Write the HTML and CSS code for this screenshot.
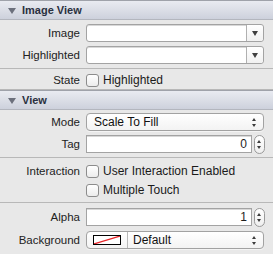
FILE: index.html
```html
<!DOCTYPE html>
<html lang="en">
<head>
    <meta charset="UTF-8">
    <title>Attributes Inspector</title>
    <link rel="stylesheet" href="styles.css">
</head>
<body>
    <div class="inspector">
        <div class="section-header"><span class="disclosure"></span>Image View</div>
        <div class="group">
            <div class="row">
                <label class="label">Image</label>
                <div class="combo"><span class="combo-text"></span><span class="combo-btn"><span class="arrow-down"></span></span></div>
            </div>
            <div class="row">
                <label class="label">Highlighted</label>
                <div class="combo"><span class="combo-text"></span><span class="combo-btn"><span class="arrow-down"></span></span></div>
            </div>
        </div>
        <div class="group single">
            <div class="row">
                <label class="label">State</label>
                <span class="check"></span><span class="check-label">Highlighted</span>
            </div>
        </div>

        <div class="section-header"><span class="disclosure"></span>View</div>
        <div class="group tight">
            <div class="row">
                <label class="label">Mode</label>
                <div class="popup"><span class="popup-text">Scale To Fill</span><span class="updown"></span></div>
            </div>
            <div class="row">
                <label class="label">Tag</label>
                <div class="number"><span class="number-field">0</span><span class="stepper"><span class="updown"></span></span></div>
            </div>
        </div>
        <div class="group checks">
            <div class="row">
                <label class="label">Interaction</label>
                <span class="check"></span><span class="check-label">User Interaction Enabled</span>
            </div>
            <div class="row">
                <label class="label"></label>
                <span class="check"></span><span class="check-label">Multiple Touch</span>
            </div>
        </div>
        <div class="group last">
            <div class="row">
                <label class="label">Alpha</label>
                <div class="number"><span class="number-field">1</span><span class="stepper"><span class="updown"></span></span></div>
            </div>
            <div class="row">
                <label class="label">Background</label>
                <div class="popup color">
                    <span class="swatch">
                        <svg width="26" height="8" viewBox="0 0 26 8"><line x1="0" y1="8" x2="26" y2="0" stroke="#e8262a" stroke-width="1.2"/></svg>
                    </span>
                    <span class="popup-text">Default</span><span class="updown"></span>
                </div>
            </div>
        </div>
    </div>
</body>
</html>
```

FILE: styles.css
```css
* {
    margin: 0;
    padding: 0;
    box-sizing: border-box;
}

body {
    font-family: "Liberation Sans", Arial, sans-serif;
    font-size: 12px;
    color: #1e1e1e;
    background: #e8e8e8;
}

.inspector {
    width: 273px;
    height: 254px;
    overflow: hidden;
    background: #e8e8e8;
}

.section-header {
    height: 20px;
    display: flex;
    align-items: center;
    padding-left: 8px;
    font-size: 11px;
    font-weight: bold;
    color: #2a3040;
    background: linear-gradient(#e9ebf1, #cdd1dc);
    border-top: 1px solid #9fa2aa;
    border-bottom: 1px solid #b3b6be;
}

.disclosure {
    width: 0;
    height: 0;
    border-left: 4px solid transparent;
    border-right: 4px solid transparent;
    border-top: 6px solid #6c707c;
    margin-right: 6px;
    margin-top: 1px;
}

.group {
    padding: 4px 0 4px;
    border-bottom: 1px solid #b8b8b8;
    display: flex;
    flex-direction: column;
    gap: 4px;
}

.group.single {
    padding: 2px 0 0;
}

.group.tight {
    padding: 3px 0 4px;
}

.group.checks {
    padding: 4px 0 3px;
    gap: 1px;
}

.group.last {
    padding-top: 5px;
    gap: 5px;
    border-bottom: none;
}

.row {
    display: flex;
    align-items: center;
    height: 18px;
}

.label {
    width: 80px;
    text-align: right;
    font-size: 11.5px;
    color: #222;
    margin-right: 6px;
    flex-shrink: 0;
}

.combo {
    width: 178px;
    height: 18px;
    display: flex;
    background: #fff;
    border: 1px solid #a3a3a3;
    border-radius: 3px;
    box-shadow: inset 0 1px 0 #d8d8d8;
}

.combo-text {
    flex: 1;
}

.combo-btn {
    width: 17px;
    border-left: 1px solid #b0b0b0;
    display: flex;
    align-items: center;
    justify-content: center;
    background: linear-gradient(#ffffff, #f1f1f1);
    border-radius: 0 3px 3px 0;
}

.arrow-down {
    width: 0;
    height: 0;
    border-left: 3.5px solid transparent;
    border-right: 3.5px solid transparent;
    border-top: 5px solid #404040;
}

.check {
    width: 13px;
    height: 13px;
    border: 1px solid #8c8c8c;
    border-radius: 3px;
    background: linear-gradient(#ffffff, #ececec);
    margin-right: 4px;
    flex-shrink: 0;
}

.check-label {
    font-size: 12px;
    color: #1a1a1a;
}

.popup {
    width: 178px;
    height: 18px;
    display: flex;
    align-items: center;
    padding: 0 6px 0 7px;
    border: 1px solid #a2a2a2;
    border-radius: 4px;
    background: linear-gradient(#ffffff, #f3f3f3);
    box-shadow: 0 1px 0 #f4f4f4;
}

.popup-text {
    flex: 1;
    font-size: 12px;
    color: #111;
}

.updown {
    width: 5px;
    height: 9px;
    position: relative;
}

.updown::before,
.updown::after {
    content: "";
    position: absolute;
    left: 0;
    border-left: 2.5px solid transparent;
    border-right: 2.5px solid transparent;
}

.updown::before {
    top: 0;
    border-bottom: 3px solid #3c3c3c;
}

.updown::after {
    bottom: 0;
    border-top: 3px solid #3c3c3c;
}

.number {
    width: 180px;
    height: 18px;
    display: flex;
    align-items: center;
}

.number-field {
    width: 166px;
    height: 18px;
    background: #fff;
    border: 1px solid #a3a3a3;
    box-shadow: inset 0 1px 0 #d8d8d8;
    text-align: right;
    padding-right: 4px;
    line-height: 16px;
    font-size: 12px;
}

.stepper {
    width: 11px;
    height: 19px;
    margin-left: 2px;
    border: 1px solid #9a9a9a;
    border-radius: 6px;
    background: linear-gradient(#ffffff, #efefef);
    display: flex;
    align-items: center;
    justify-content: center;
}

.popup.color {
    padding-left: 6px;
}

.swatch {
    width: 28px;
    height: 10px;
    border: 1px solid #000;
    background: #fff;
    display: flex;
    margin-right: 6px;
}

.popup.color .popup-text {
    border-left: 1px solid #b8b8b8;
    padding-left: 5px;
    height: 16px;
    line-height: 16px;
}
```
